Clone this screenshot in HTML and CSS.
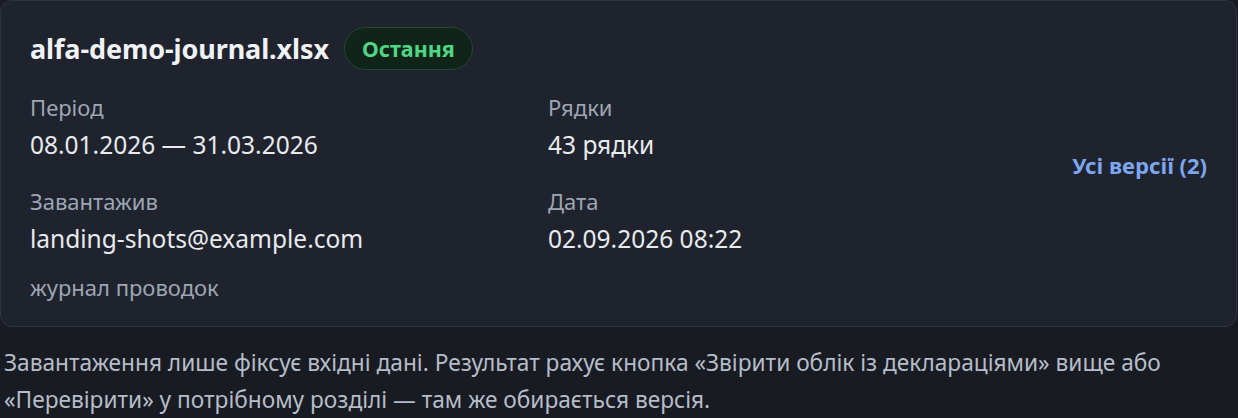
FILE: index.html
```html
<!DOCTYPE html>
<html lang="uk">
<head>
<meta charset="utf-8">
<title>alfa-demo-journal.xlsx</title>
<link rel="stylesheet" href="styles.css">
</head>
<body>
<section class="card">
  <div class="card-main">
    <div class="card-head">
      <h2 class="file-name">alfa-demo-journal.xlsx</h2>
      <span class="badge">Остання</span>
    </div>
    <div class="meta">
      <div class="field">
        <div class="label">Період</div>
        <div class="value">08.01.2026 — 31.03.2026</div>
      </div>
      <div class="field">
        <div class="label">Рядки</div>
        <div class="value">43 рядки</div>
      </div>
      <div class="field">
        <div class="label">Завантажив</div>
        <div class="value">landing-shots@example.com</div>
      </div>
      <div class="field">
        <div class="label">Дата</div>
        <div class="value">02.09.2026 08:22</div>
      </div>
    </div>
    <div class="note">журнал проводок</div>
  </div>
  <a class="versions" href="#">Усі версії (2)</a>
</section>
<p class="hint">Завантаження лише фіксує вхідні дані. Результат рахує кнопка «Звірити облік із деклараціями» вище або «Перевірити» у потрібному розділі — там же обирається версія.</p>
</body>
</html>
```
FILE: styles.css
```css
html, body {
  margin: 0;
  padding: 0;
  background: #181b22;
}
body {
  font-family: "Noto Sans", "Open Sans", sans-serif;
  color: #e6e8ec;
  width: 1238px;
  height: 418px;
  overflow: hidden;
}
.card {
  box-sizing: border-box;
  width: 1237px;
  height: 327px;
  background: #1f232d;
  border: 1px solid #2f343e;
  border-radius: 12px;
  display: flex;
  align-items: center;
  padding: 0 29px 0 29px;
}
.card-main {
  flex: 1;
  align-self: flex-start;
  padding-top: 26px;
}
.card-head {
  display: flex;
  align-items: center;
  gap: 15px;
  height: 43px;
}
.file-name {
  margin: 0;
  font-size: 27px;
  font-weight: 700;
  color: #f0f2f5;
  line-height: 43px;
  letter-spacing: -0.1px;
}
.badge {
  display: inline-block;
  box-sizing: border-box;
  height: 43px;
  line-height: 41px;
  padding: 0 17px;
  border-radius: 22px;
  background: #10241a;
  border: 1px solid #1f4a2f;
  color: #4fd584;
  font-weight: 700;
  font-size: 21.5px;
}
.meta {
  display: grid;
  grid-template-columns: 518px 1fr;
  row-gap: 25px;
  margin-top: 22px;
}
.label {
  font-size: 22px;
  line-height: 30px;
  color: #9ea6b4;
}
.value {
  font-size: 24.5px;
  line-height: 32px;
  margin-top: 7px;
  color: #e8eaee;
}
.note {
  margin-top: 17px;
  font-size: 22px;
  line-height: 30px;
  color: #9ea6b4;
}
.versions {
  color: #7ea6f0;
  font-weight: 700;
  font-size: 22px;
  text-decoration: none;
  margin-top: 2px;
}
.hint {
  margin: 17px 0 0 0;
  padding: 0 4px;
  font-size: 22.7px;
  line-height: 37px;
  color: #b6bdc9;
}
```
